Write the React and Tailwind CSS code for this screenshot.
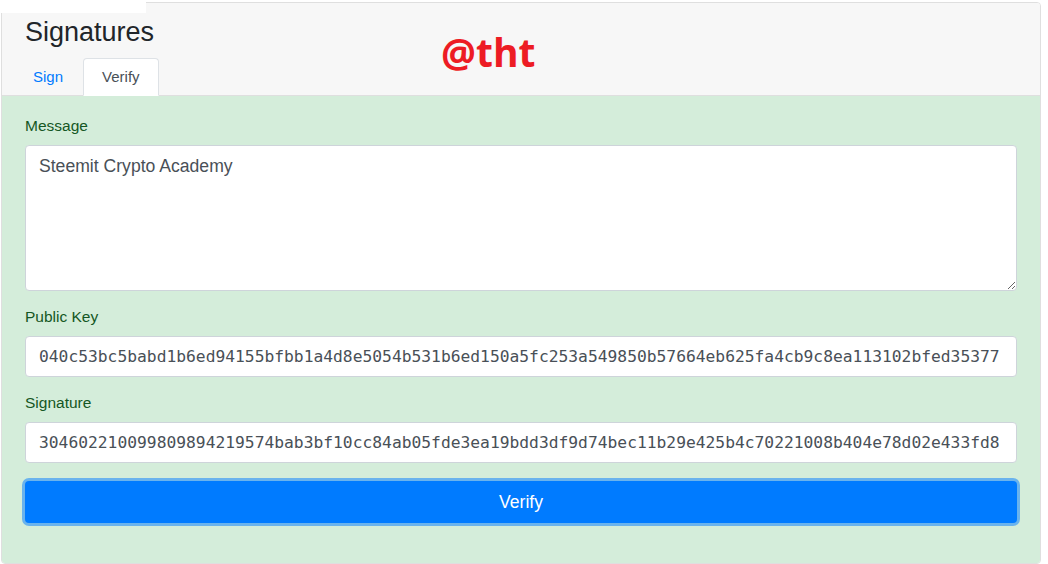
const PUBLIC_KEY =
	"040c53bc5babd1b6ed94155bfbb1a4d8e5054b531b6ed150a5fc253a549850b57664eb625fa4cb9c8ea113102bfed35377";
const SIGNATURE =
	"304602210099809894219574bab3bf10cc84ab05fde3ea19bdd3df9d74bec11b29e425b4c70221008b404e78d02e433fd8";

const Field = ({ label, value, first = false }) => (
	<div className={first ? "" : "mt-[14px]"}>
		<label className="block text-[15.5px] leading-[23px] text-[#155724] mb-[8px]">
			{label}
		</label>
		<input
			readOnly
			value={value}
			className="block w-full h-[41px] px-[13px] bg-white border border-[#ced4da] rounded-[4px] text-[16.3px] text-[#495057] outline-none [font-family:'DejaVu_Sans_Mono',monospace]"
		/>
	</div>
);

export default function App() {
	return (
		<div className="relative h-[564px] bg-white pl-[1px] pt-[2px] [font-family:'Liberation_Sans',Arial,sans-serif]">
			{/* white strip on top-left corner of the capture */}
			<div className="absolute left-0 top-0 w-[146px] h-[13px] bg-white z-10"></div>

			<div className="w-[1040px] h-[562px] border border-[#dfdfdf] rounded-[4px] overflow-hidden flex flex-col">
				<div className="relative bg-[#f7f7f7] border-b border-[#dfdfdf] px-[23px] pt-[13px]">
					<h1 className="text-[27px] leading-[32px] text-[#212529]">Signatures</h1>
					<div className="flex mt-[10px] -mb-px -ml-[12px]">
						<a className="h-[38px] px-[19px] flex items-center text-[15px] text-[#007bff] border border-transparent">
							Sign
						</a>
						<a className="h-[38px] px-[18px] flex items-center text-[15px] text-[#495057] bg-white border border-[#dee2e6] border-b-white rounded-t-[4px]">
							Verify
						</a>
					</div>
					<span className="absolute left-[439px] top-[26px] text-[39px] leading-[46px] font-bold text-[#ed1c24] [font-family:'Open_Sans',sans-serif]">
						@tht
					</span>
				</div>

				<div className="flex-1 bg-[#d4edda] px-[23px] pt-[18px]">
					<label className="block text-[15.5px] leading-[23px] text-[#155724] mb-[8px]">
						Message
					</label>
					<textarea
						readOnly
						value="Steemit Crypto Academy"
						className="block w-full h-[146px] px-[13px] pt-[7px] bg-white border border-[#ced4da] rounded-[4px] text-[17.6px] leading-[26px] text-[#495057] outline-none"
					/>
					<Field label="Public Key" value={PUBLIC_KEY} />
					<Field label="Signature" value={SIGNATURE} />
					<button className="mt-[18px] w-full h-[42px] bg-[#007bff] text-white text-[17.6px] rounded-[4px] ring-[3px] ring-[#007bff]/50">
						Verify
					</button>
				</div>
			</div>
		</div>
	);
}
